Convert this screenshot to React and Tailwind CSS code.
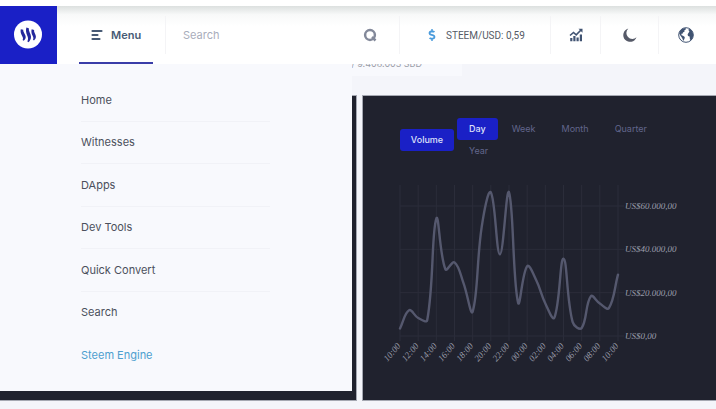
import { FaDollarSign } from 'react-icons/fa';

const menuItems = ['Home', 'Witnesses', 'DApps', 'Dev Tools', 'Quick Convert', 'Search'];
const ranges = ['Day', 'Week', 'Month', 'Quarter', 'Year'];
const hours = ['10:00', '12:00', '14:00', '16:00', '18:00', '20:00', '22:00', '00:00', '02:00', '04:00', '06:00', '08:00', '10:00'];
const volume = [3500, 11900, 8300, 7400, 54200, 30800, 34000, 24300, 11300, 50500, 66300, 37700, 66300, 15400, 32200, 25700, 15000, 8500, 35700, 6500, 3700, 18300, 15000, 12900, 28300];

const yLabels = [
  { value: 60000, label: 'US$60.000,00' },
  { value: 40000, label: 'US$40.000,00' },
  { value: 20000, label: 'US$20.000,00' },
  { value: 0, label: 'US$0,00' },
];

const toX = (i) => 20 + (i * 218) / 24;
const toY = (value) => 155 - (value * 130) / 60000;

// Cubic curve through all points, tension 0.4
function smoothPath(values) {
  const pts = values.map((v, i) => ({ x: toX(i), y: toY(v) }));
  const controls = pts.map((p, i) => {
    const prev = pts[i - 1] || p;
    const next = pts[i + 1] || p;
    const d1 = Math.hypot(p.x - prev.x, p.y - prev.y);
    const d2 = Math.hypot(next.x - p.x, next.y - p.y);
    const a = (0.4 * d1) / (d1 + d2);
    const b = (0.4 * d2) / (d1 + d2);
    return {
      inX: p.x - a * (next.x - prev.x),
      inY: p.y - a * (next.y - prev.y),
      outX: p.x + b * (next.x - prev.x),
      outY: p.y + b * (next.y - prev.y),
    };
  });
  return pts
    .map((p, i) => {
      if (i === 0) return `M${p.x},${p.y}`;
      const from = controls[i - 1];
      const to = controls[i];
      return `C${from.outX},${from.outY} ${to.inX},${to.inY} ${p.x},${p.y}`;
    })
    .join(' ');
}

function SteemLogo() {
  return (
    <svg viewBox="0 0 30 30" className="size-[30px]" aria-hidden="true">
      <circle cx="14" cy="14.5" r="14" fill="#fff" />
      <g fill="#24289c">
        <path d="M6.800 9.200L9.300 9.800C8.800 12 11.700 14.500 11.700 17C11.700 18.600 10.900 19.800 9.600 20.800L8.600 20.100C9.400 18.600 9 17.500 8 15.700C6.800 13.500 6.200 11.300 6.800 9.200Z" />
        <path d="M12.400 7.400L14.800 8.200C14.300 11 17 13.700 17 16.700C17 19 16 20.800 14.400 22.300L13.400 21.400C14.400 19.400 14.200 17.700 13.200 15.600C12 12.800 11.600 10 12.400 7.400Z" />
        <path d="M17.700 9.200L20.100 9.900C19.600 12.200 21.900 14.300 21.900 16.600C21.900 18.200 21.200 19.400 20 20.500L19 19.700C19.700 18.200 19.400 17 18.500 15.400C17.400 13.300 17.100 11.200 17.700 9.200Z" />
      </g>
    </svg>
  );
}

function MenuIcon() {
  return (
    <svg viewBox="0 0 12 12" className="size-3" fill="none" stroke="#475a75" strokeWidth="2.200" strokeLinecap="round" aria-hidden="true">
      <path d="M1.500 2H10.500M1.500 6H6.500M1.500 10H8.500" />
    </svg>
  );
}

function SearchIcon() {
  return (
    <svg viewBox="0 0 14 14" className="size-3.5" fill="none" stroke="#83899a" strokeWidth="2.500" aria-hidden="true">
      <circle cx="7" cy="7" r="4.900" />
      <path d="M9 9L12.500 12.500" />
    </svg>
  );
}

function GrowthIcon() {
  return (
    <svg viewBox="0 0 14 14" className="size-3.5" fill="none" stroke="#405372" aria-hidden="true">
      <path d="M1 7.500L4.500 4.500L7.200 6.800L12 2" strokeWidth="1.600" />
      <path d="M9.500 .8H13.500V4.800Z" fill="#405372" stroke="none" />
      <path d="M2.300 10V13.300M5.400 8V13.300M8.600 9.500V13.300M11.900 6.500V13.300" strokeWidth="2.200" />
    </svg>
  );
}

function MoonIcon() {
  return (
    <svg viewBox="0 0 14 14" className="size-3.5" fill="#565a68" aria-hidden="true">
      <path d="M5.300 .5A5 5 0 0 0 13.500 9.300A6.800 6.800 0 1 1 5.300 .5Z" />
    </svg>
  );
}

function GlobeIcon() {
  return (
    <svg viewBox="0 0 16 16" className="size-4" aria-hidden="true">
      <circle cx="8" cy="8" r="7.300" fill="#fff" stroke="#405372" strokeWidth="1" />
      <g fill="#405372">
        <path d="M1.200 6.500C1.800 3.600 4.200 1.200 7.500 1L8 2.200L6.400 3.300L6.600 4.400L5 5.500L4.500 6.800L3.300 6.700L3.600 8.200L5 8.800L6.800 10L6.500 11.800L5.300 14L4.600 12L3.600 10.200L2.300 8.400Z" />
        <path d="M11 1.700C13.600 2.800 15.200 5.200 15.200 8C15.200 10.200 14.300 12 12.900 13.400L11.900 12.200L11.600 9.600L10 9L9.600 7.200L10.800 5.600L11.400 4.200L10.300 3Z" />
      </g>
    </svg>
  );
}

function Header() {
  return (
    <header className="relative z-10 flex h-[58px] items-stretch bg-linear-to-b from-[#dce0df] via-[#f8f9f9] via-15% to-white to-35%">
      <a href="#" aria-label="Steem" className="flex w-[57px] shrink-0 items-center justify-center bg-[#1a20c6]">
        <SteemLogo />
      </a>
      <button className="ml-[22px] flex w-[74px] shrink-0 items-center gap-2 border-b-2 border-[#3a3da8] pt-0.5 pl-3 text-[11px] font-semibold text-[#475a75]">
        <MenuIcon />
        Menu
      </button>
      <div className="my-2.5 ml-3 flex min-w-0 flex-1 items-center border-x border-[#f4f4f6] pr-[22px] pl-[17px]">
        <input
          type="text"
          aria-label="Search"
          placeholder="Search"
          className="min-w-0 flex-1 bg-transparent text-[11px] text-[#475a75] outline-none placeholder:text-[#a9adbb]"
        />
        <button aria-label="Submit search">
          <SearchIcon />
        </button>
      </div>
      <div className="my-2.5 flex w-[151px] shrink-0 items-center gap-2 border-r border-[#f4f4f6] pl-[26px] font-[Roboto,sans-serif] text-[10px] whitespace-nowrap text-[#565b66]">
        <FaDollarSign size={12} className="text-[#4a9bdc]" />
        <span>STEEM/USD: 0,59</span>
      </div>
      <button aria-label="Markets" className="my-2.5 flex w-[50px] shrink-0 items-center justify-center border-r border-[#f4f4f6]">
        <GrowthIcon />
      </button>
      <button aria-label="Dark mode" className="my-2.5 flex w-[58px] shrink-0 items-center justify-center border-r border-[#f4f4f6]">
        <MoonIcon />
      </button>
      <button aria-label="Language" className="my-2.5 flex w-[57px] shrink-0 items-center justify-center pr-1">
        <GlobeIcon />
      </button>
    </header>
  );
}

function Menu() {
  return (
    <nav className="absolute top-0 left-0 w-[352px] bg-[#f8f9fd] py-[15px] pl-[81px] text-[11px] text-[#4b505c]">
      <ul className="flex h-[297px] w-[189px] flex-col">
        {menuItems.map((item) => (
          <li key={item} className="flex-1 border-b border-[#f1f2f7] nth-[6]:border-transparent">
            <a href="#" className="flex h-full items-center">{item}</a>
          </li>
        ))}
        <li className="flex-1">
          <a href="#" className="flex h-full items-center text-[#4d9fcf]">Steem Engine</a>
        </li>
      </ul>
    </nav>
  );
}

function VolumeChart() {
  return (
    <svg viewBox="0 0 304 190" className="w-[304px] max-w-full" role="img" aria-label="Volume per hour">
      <g stroke="#2b2d3a">
        {hours.map((_, i) => (
          <path key={i} d={`M${toX(i * 2)},4V160`} />
        ))}
        {yLabels.map((row) => (
          <path key={row.value} d={`M20,${toY(row.value)}H244`} />
        ))}
      </g>
      <path d={smoothPath(volume)} fill="none" stroke="#55586e" strokeWidth="2.4" strokeLinecap="round" />
      <g fill="#9a9dab" fontFamily="'Liberation Serif', serif" fontStyle="italic" fontSize="9">
        {yLabels.map((row) => (
          <text key={row.value} x="245" y={toY(row.value) + 3}>{row.label}</text>
        ))}
        {hours.map((hour, i) => (
          <text key={i} textAnchor="end" transform={`translate(${toX(i * 2) + 1} 165) rotate(-50)`}>{hour}</text>
        ))}
      </g>
    </svg>
  );
}

function ChartCard() {
  return (
    <section className="min-w-0 flex-1 border border-r-0 border-[#a5a8b2] bg-[#20222e] pt-[22px] pl-[17px]">
      <div className="flex items-center gap-[3px] pl-5 text-[9px] text-[#62668c]">
        <button className="h-[22px] w-[54px] shrink-0 rounded-[3px] bg-[#1a20c6] font-medium text-[#dfe1fa]">Volume</button>
        <div className="flex max-w-[220px] flex-wrap gap-x-0.5">
          {ranges.map((range) => (
            <button
              key={range}
              className={
                range === 'Day'
                  ? 'h-[22px] rounded-[3px] bg-[#1a20c6] px-3 font-medium text-[#dfe1fa]'
                  : 'h-[22px] px-3'
              }
            >
              {range}
            </button>
          ))}
        </div>
      </div>
      <div className="mt-[19px]">
        <VolumeChart />
      </div>
    </section>
  );
}

export default function App() {
  return (
    <div className="min-h-screen bg-[#f4f5fa] pb-2 font-['Inter',sans-serif]">
      <div className="h-1.5 bg-white" />
      <Header />
      <main className="relative">
        <div className="flow-root h-[31px]">
          <p className="-mt-1.5 h-[18px] w-[462px] bg-[#f8f9fd] pr-10 text-right text-[9px] leading-3 text-[#9b9ea8]">
            / 9.408.003 SBD
          </p>
        </div>
        <div className="flex h-[306px] gap-[5px]">
          <section className="w-[357px] shrink-0 border border-l-0 border-[#a5a8b2] bg-[#20222e]" />
          <ChartCard />
        </div>
        <Menu />
      </main>
    </div>
  );
}
